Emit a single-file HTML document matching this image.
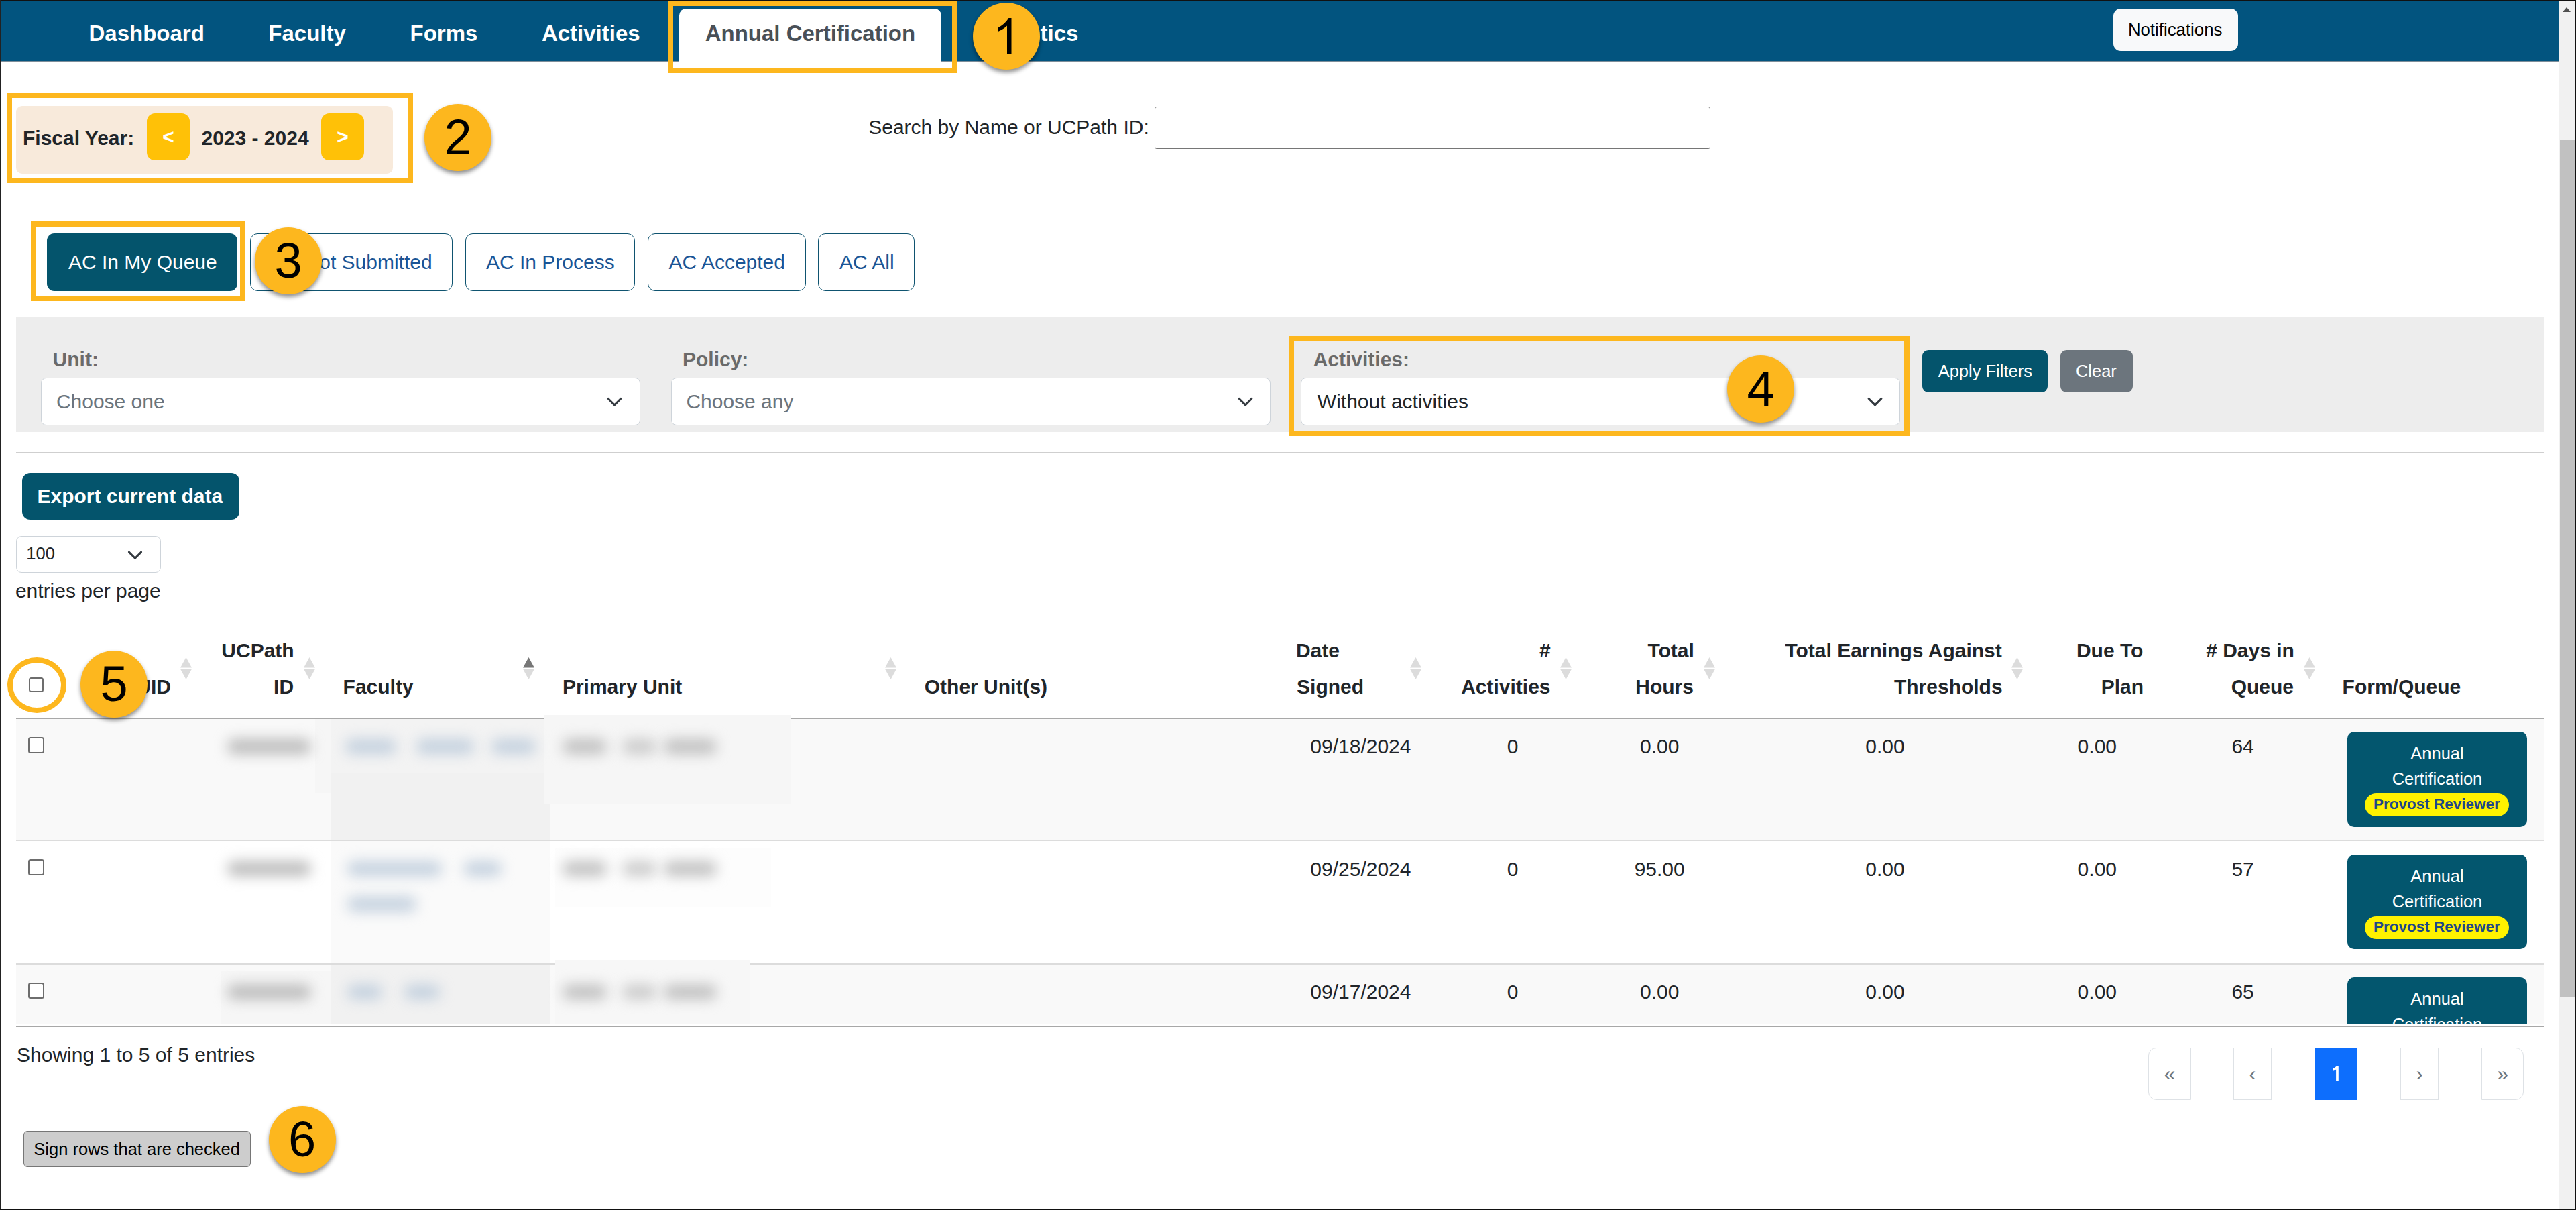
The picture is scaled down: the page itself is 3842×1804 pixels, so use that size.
<!DOCTYPE html>
<html><head><meta charset="utf-8"><title>Annual Certification</title>
<style>
html,body{margin:0;padding:0;width:3842px;height:1804px;overflow:hidden;background:#fff;}
body{position:relative;font-family:"Liberation Sans",sans-serif;}
.t{position:absolute;white-space:nowrap;line-height:0;}
.r{position:absolute;}
.circ{position:absolute;width:100px;height:100px;border-radius:50%;background:#fdb71e;box-shadow:0 4px 6px rgba(0,0,0,0.45);color:#000;font-size:74px;line-height:100px;text-align:center;font-family:"Liberation Sans",sans-serif;}
</style></head><body>
<div class="r" style="left:0.00px;top:0.00px;width:3842.00px;height:1804.00px;background:#fff;"></div>
<div class="r" style="left:1.00px;top:1.00px;width:3815.00px;height:90.50px;background:#02547f;"></div>
<div class="r" style="left:1.00px;top:91.20px;width:3815.00px;height:1.00px;background:#7d8d99;"></div>
<div class="t" style="left:132.49px;top:49.80px;font-size:33px;font-weight:700;color:#fff;">Dashboard</div>
<div class="t" style="left:400.29px;top:49.80px;font-size:33px;font-weight:700;color:#fff;">Faculty</div>
<div class="t" style="left:611.49px;top:49.80px;font-size:33px;font-weight:700;color:#fff;">Forms</div>
<div class="t" style="left:807.88px;top:49.80px;font-size:33px;font-weight:700;color:#fff;">Activities</div>
<div class="t" style="right:2233.65px;top:49.80px;font-size:33px;font-weight:700;color:#fff;">Statistics</div>
<div class="r" style="left:1013.00px;top:13.00px;width:391.00px;height:79.50px;background:#fff;border-radius:10px 10px 0 0;"></div>
<div class="t" style="left:1051.68px;top:49.80px;font-size:33px;font-weight:700;color:#495057;">Annual Certification</div>
<div class="r" style="left:996.00px;top:1.00px;width:432.00px;height:108.00px;border:8px solid #fdb71e;box-sizing:border-box;"></div>
<div class="r" style="left:3152.00px;top:13.00px;width:186.00px;height:63.00px;background:#f8f9fa;border-radius:11px;"></div>
<div class="t" style="left:3173.88px;top:44.30px;font-size:25.8px;color:#000;">Notifications</div>
<div class="r" style="left:10.00px;top:138.00px;width:606.00px;height:134.50px;border:8px solid #fdb71e;box-sizing:border-box;"></div>
<div class="r" style="left:24.00px;top:158.00px;width:562.00px;height:101.00px;background:#f8eadb;border-radius:9px;"></div>
<div class="t" style="left:33.99px;top:205.50px;font-size:30px;font-weight:700;color:#212529;">Fiscal Year:</div>
<div class="r" style="left:219.00px;top:169.00px;width:64.00px;height:70.00px;background:#ffc107;border-radius:12px;"></div>
<div class="r" style="left:479.00px;top:169.00px;width:64.00px;height:70.00px;background:#ffc107;border-radius:12px;"></div>
<div class="t" style="left:242.24px;top:203.50px;font-size:30px;font-weight:700;color:#fff;">&lt;</div>
<div class="t" style="left:502.24px;top:203.50px;font-size:30px;font-weight:700;color:#fff;">&gt;</div>
<div class="t" style="left:300.46px;top:205.50px;font-size:30px;font-weight:700;color:#212529;">2023 - 2024</div>
<div class="t" style="left:1295.24px;top:189.50px;font-size:30px;color:#212529;">Search by Name or UCPath ID:</div>
<div class="r" style="left:1722.00px;top:158.50px;width:829.00px;height:63.00px;border:1.5px solid #767676;border-radius:3px;box-sizing:border-box;background:#fff;"></div>
<div class="r" style="left:24.00px;top:316.50px;width:3770.00px;height:1.50px;background:#cfcfcf;"></div>
<div class="r" style="left:70.00px;top:348.00px;width:284.00px;height:85.50px;background:#04546c;border-radius:11px;"></div>
<div class="t" style="left:101.94px;top:390.50px;font-size:30px;color:#fff;">AC In My Queue</div>
<div class="r" style="left:373.00px;top:348.00px;width:302.00px;height:85.80px;border:1.5px solid #0f5470;border-radius:11px;box-sizing:border-box;"></div>
<div class="t" style="right:3197.37px;top:390.50px;font-size:30px;color:#1a5596;">Not Submitted</div>
<div class="r" style="left:694.00px;top:348.00px;width:253.00px;height:85.80px;border:1.5px solid #0f5470;border-radius:11px;box-sizing:border-box;"></div>
<div class="t" style="left:724.94px;top:390.50px;font-size:30px;color:#1a5596;">AC In Process</div>
<div class="r" style="left:966.00px;top:348.00px;width:235.60px;height:85.80px;border:1.5px solid #0f5470;border-radius:11px;box-sizing:border-box;"></div>
<div class="t" style="left:997.54px;top:390.50px;font-size:30px;color:#1a5596;">AC Accepted</div>
<div class="r" style="left:1220.00px;top:348.00px;width:144.00px;height:85.80px;border:1.5px solid #0f5470;border-radius:11px;box-sizing:border-box;"></div>
<div class="t" style="left:1251.94px;top:390.50px;font-size:30px;color:#1a5596;">AC All</div>
<div class="r" style="left:46.00px;top:330.00px;width:320.00px;height:118.50px;border:8px solid #fdb71e;box-sizing:border-box;"></div>
<div class="r" style="left:24.00px;top:472.00px;width:3770.00px;height:172.00px;background:#ededed;"></div>
<div class="t" style="left:78.60px;top:536.00px;font-size:30px;font-weight:700;color:#6a6a6a;">Unit:</div>
<div class="t" style="left:1017.99px;top:536.00px;font-size:30px;font-weight:700;color:#6a6a6a;">Policy:</div>
<div class="t" style="left:1958.65px;top:536.00px;font-size:30px;font-weight:700;color:#6a6a6a;">Activities:</div>
<div class="r" style="left:61.30px;top:563.30px;width:894.10px;height:71.00px;background:#fff;border:1.5px solid #ced4da;border-radius:8px;box-sizing:border-box;"></div>
<div class="t" style="left:83.88px;top:599.00px;font-size:30px;color:#6c757d;">Choose one</div>
<svg class="r" style="left:905.00px;top:591.50px;" width="23.00" height="15.00" viewBox="0 0 16 10"><path d="M1.5 1.5 L8 8 L14.5 1.5" fill="none" stroke="#343a40" stroke-width="2.1" stroke-linecap="round" stroke-linejoin="round"/></svg>
<div class="r" style="left:1001.30px;top:563.30px;width:893.30px;height:71.00px;background:#fff;border:1.5px solid #ced4da;border-radius:8px;box-sizing:border-box;"></div>
<div class="t" style="left:1023.38px;top:599.00px;font-size:30px;color:#6c757d;">Choose any</div>
<svg class="r" style="left:1845.50px;top:591.50px;" width="23.00" height="15.00" viewBox="0 0 16 10"><path d="M1.5 1.5 L8 8 L14.5 1.5" fill="none" stroke="#343a40" stroke-width="2.1" stroke-linecap="round" stroke-linejoin="round"/></svg>
<div class="r" style="left:1940.40px;top:563.00px;width:894.00px;height:71.10px;background:#fff;border:1.5px solid #ced4da;border-radius:8px;box-sizing:border-box;"></div>
<div class="t" style="left:1964.87px;top:599.00px;font-size:30px;color:#212529;">Without activities</div>
<svg class="r" style="left:2785.00px;top:591.50px;" width="23.00" height="15.00" viewBox="0 0 16 10"><path d="M1.5 1.5 L8 8 L14.5 1.5" fill="none" stroke="#343a40" stroke-width="2.1" stroke-linecap="round" stroke-linejoin="round"/></svg>
<div class="r" style="left:1922.00px;top:501.00px;width:926.00px;height:149.00px;border:8px solid #fdb71e;box-sizing:border-box;"></div>
<div class="r" style="left:2867.00px;top:522.00px;width:187.00px;height:63.00px;background:#04546c;border-radius:9px;"></div>
<div class="t" style="left:2890.65px;top:553.00px;font-size:25.5px;color:#fff;">Apply Filters</div>
<div class="r" style="left:3073.00px;top:522.00px;width:108.00px;height:63.00px;background:#6c757d;border-radius:9px;"></div>
<div class="t" style="left:3095.91px;top:553.00px;font-size:25.5px;color:#fff;">Clear</div>
<div class="r" style="left:24.00px;top:673.50px;width:3770.00px;height:1.50px;background:#cfcfcf;"></div>
<div class="r" style="left:33.00px;top:705.00px;width:324.00px;height:70.00px;background:#04546c;border-radius:12px;"></div>
<div class="t" style="left:55.49px;top:739.50px;font-size:30px;font-weight:700;color:#fff;">Export current data</div>
<div class="r" style="left:24.20px;top:799.40px;width:215.40px;height:55.10px;background:#fff;border:1.5px solid #ced4da;border-radius:8px;box-sizing:border-box;"></div>
<div class="t" style="left:39.36px;top:825.30px;font-size:25.5px;color:#212529;">100</div>
<svg class="r" style="left:190.00px;top:820.50px;" width="23.00" height="14.00" viewBox="0 0 16 10"><path d="M1.5 1.5 L8 8 L14.5 1.5" fill="none" stroke="#343a40" stroke-width="2.1" stroke-linecap="round" stroke-linejoin="round"/></svg>
<div class="t" style="left:22.93px;top:880.70px;font-size:30px;color:#212529;">entries per page</div>
<div class="t" style="right:3587.04px;top:1023.70px;font-size:30px;font-weight:700;color:#212529;">UID</div>
<svg class="r" style="left:269.00px;top:980px;" width="17" height="33" viewBox="0 0 17 33"><path d="M8.5 0 L17 15.5 L0 15.5 Z" fill="#dcdcdc"/><path d="M0 17.5 L17 17.5 L8.5 33 Z" fill="#dcdcdc"/></svg>
<div class="t" style="right:3403.34px;top:970.00px;font-size:30px;font-weight:700;color:#212529;">UCPath</div>
<div class="t" style="right:3403.94px;top:1023.70px;font-size:30px;font-weight:700;color:#212529;">ID</div>
<svg class="r" style="left:452.50px;top:980px;" width="17" height="33" viewBox="0 0 17 33"><path d="M8.5 0 L17 15.5 L0 15.5 Z" fill="#dcdcdc"/><path d="M0 17.5 L17 17.5 L8.5 33 Z" fill="#dcdcdc"/></svg>
<div class="t" style="left:511.59px;top:1023.70px;font-size:30px;font-weight:700;color:#212529;">Faculty</div>
<svg class="r" style="left:780.00px;top:980px;" width="17" height="33" viewBox="0 0 17 33"><path d="M8.5 0 L17 15.5 L0 15.5 Z" fill="#777"/><path d="M0 17.5 L17 17.5 L8.5 33 Z" fill="#dcdcdc"/></svg>
<div class="t" style="left:838.89px;top:1023.70px;font-size:30px;font-weight:700;color:#212529;">Primary Unit</div>
<svg class="r" style="left:1319.60px;top:980px;" width="17" height="33" viewBox="0 0 17 33"><path d="M8.5 0 L17 15.5 L0 15.5 Z" fill="#dcdcdc"/><path d="M0 17.5 L17 17.5 L8.5 33 Z" fill="#dcdcdc"/></svg>
<div class="t" style="left:1378.77px;top:1023.70px;font-size:30px;font-weight:700;color:#212529;">Other Unit(s)</div>
<div class="t" style="left:1932.89px;top:970.00px;font-size:30px;font-weight:700;color:#212529;">Date</div>
<div class="t" style="left:1934.04px;top:1023.70px;font-size:30px;font-weight:700;color:#212529;">Signed</div>
<svg class="r" style="left:2102.70px;top:980px;" width="17" height="33" viewBox="0 0 17 33"><path d="M8.5 0 L17 15.5 L0 15.5 Z" fill="#dcdcdc"/><path d="M0 17.5 L17 17.5 L8.5 33 Z" fill="#dcdcdc"/></svg>
<div class="t" style="right:1529.22px;top:970.00px;font-size:30px;font-weight:700;color:#212529;">#</div>
<div class="t" style="right:1529.47px;top:1023.70px;font-size:30px;font-weight:700;color:#212529;">Activities</div>
<svg class="r" style="left:2327.00px;top:980px;" width="17" height="33" viewBox="0 0 17 33"><path d="M8.5 0 L17 15.5 L0 15.5 Z" fill="#dcdcdc"/><path d="M0 17.5 L17 17.5 L8.5 33 Z" fill="#dcdcdc"/></svg>
<div class="t" style="right:1315.18px;top:970.00px;font-size:30px;font-weight:700;color:#212529;">Total</div>
<div class="t" style="right:1316.07px;top:1023.70px;font-size:30px;font-weight:700;color:#212529;">Hours</div>
<svg class="r" style="left:2541.20px;top:980px;" width="17" height="33" viewBox="0 0 17 33"><path d="M8.5 0 L17 15.5 L0 15.5 Z" fill="#dcdcdc"/><path d="M0 17.5 L17 17.5 L8.5 33 Z" fill="#dcdcdc"/></svg>
<div class="t" style="right:856.23px;top:970.00px;font-size:30px;font-weight:700;color:#212529;">Total Earnings Against</div>
<div class="t" style="right:855.37px;top:1023.70px;font-size:30px;font-weight:700;color:#212529;">Thresholds</div>
<svg class="r" style="left:3000.20px;top:980px;" width="17" height="33" viewBox="0 0 17 33"><path d="M8.5 0 L17 15.5 L0 15.5 Z" fill="#dcdcdc"/><path d="M0 17.5 L17 17.5 L8.5 33 Z" fill="#dcdcdc"/></svg>
<div class="t" style="right:645.63px;top:970.00px;font-size:30px;font-weight:700;color:#212529;">Due To</div>
<div class="t" style="right:644.94px;top:1023.70px;font-size:30px;font-weight:700;color:#212529;">Plan</div>
<div class="t" style="right:420.14px;top:970.00px;font-size:30px;font-weight:700;color:#212529;"># Days in</div>
<div class="t" style="right:420.97px;top:1023.70px;font-size:30px;font-weight:700;color:#212529;">Queue</div>
<svg class="r" style="left:3435.70px;top:980px;" width="17" height="33" viewBox="0 0 17 33"><path d="M8.5 0 L17 15.5 L0 15.5 Z" fill="#dcdcdc"/><path d="M0 17.5 L17 17.5 L8.5 33 Z" fill="#dcdcdc"/></svg>
<div class="t" style="left:3493.59px;top:1023.70px;font-size:30px;font-weight:700;color:#212529;">Form/Queue</div>
<div class="r" style="left:43.00px;top:1010.20px;width:22.20px;height:22.20px;border:2px solid #6d6d6d;border-radius:3.5px;box-sizing:border-box;background:#fff;"></div>
<div class="r" style="left:10.5px;top:980px;width:88px;height:83px;border:8px solid #fdb71e;border-radius:50%;box-sizing:border-box;"></div>
<div class="r" style="left:0;top:1070px;width:3842px;height:457px;overflow:hidden;">
<div class="r" style="left:24.00px;top:0.50px;width:3771.00px;height:182.50px;background:#f9f9f9;"></div>
<div class="r" style="left:494.00px;top:0.50px;width:327.00px;height:182.50px;background:#f1f1f1;"></div>
<div class="r" style="left:42.00px;top:28.50px;width:24.00px;height:24.00px;border:2px solid #6d6d6d;border-radius:3.5px;box-sizing:border-box;background:#fff;"></div>
<div class="t" style="left:1954.33px;top:43.00px;font-size:30px;color:#212529;">09/18/2024</div>
<div class="t" style="left:2247.66px;top:43.00px;font-size:30px;color:#212529;">0</div>
<div class="t" style="left:2446.01px;top:43.00px;font-size:30px;color:#212529;">0.00</div>
<div class="t" style="left:2782.31px;top:43.00px;font-size:30px;color:#212529;">0.00</div>
<div class="t" style="left:3098.61px;top:43.00px;font-size:30px;color:#212529;">0.00</div>
<div class="t" style="left:3328.42px;top:43.00px;font-size:30px;color:#212529;">64</div>
<div class="r" style="left:3501.30px;top:21.00px;width:267.40px;height:141.50px;background:#03566e;border-radius:10px;"></div>
<div class="t" style="left:3595.30px;top:53.20px;font-size:25.5px;color:#fff;">Annual</div>
<div class="t" style="left:3567.68px;top:91.30px;font-size:25.5px;color:#fff;">Certification</div>
<div class="r" style="left:3526.70px;top:113.00px;width:215.00px;height:34.00px;background:#fff200;border-radius:17px;"></div>
<div class="t" style="left:3539.98px;top:129.30px;font-size:22.5px;font-weight:700;color:#1e4689;">Provost Reviewer</div>
<div class="r" style="left:24.00px;top:183.00px;width:3771.00px;height:183.50px;background:#ffffff;"></div>
<div class="r" style="left:494.00px;top:183.00px;width:327.00px;height:183.50px;background:#fafafa;"></div>
<div class="r" style="left:24.00px;top:182.50px;width:3771.00px;height:1.50px;background:#dcdcdc;"></div>
<div class="r" style="left:42.00px;top:211.00px;width:24.00px;height:24.00px;border:2px solid #6d6d6d;border-radius:3.5px;box-sizing:border-box;background:#fff;"></div>
<div class="t" style="left:1954.33px;top:225.50px;font-size:30px;color:#212529;">09/25/2024</div>
<div class="t" style="left:2247.66px;top:225.50px;font-size:30px;color:#212529;">0</div>
<div class="t" style="left:2437.66px;top:225.50px;font-size:30px;color:#212529;">95.00</div>
<div class="t" style="left:2782.31px;top:225.50px;font-size:30px;color:#212529;">0.00</div>
<div class="t" style="left:3098.61px;top:225.50px;font-size:30px;color:#212529;">0.00</div>
<div class="t" style="left:3328.42px;top:225.50px;font-size:30px;color:#212529;">57</div>
<div class="r" style="left:3501.30px;top:203.50px;width:267.40px;height:141.50px;background:#03566e;border-radius:10px;"></div>
<div class="t" style="left:3595.30px;top:235.70px;font-size:25.5px;color:#fff;">Annual</div>
<div class="t" style="left:3567.68px;top:273.80px;font-size:25.5px;color:#fff;">Certification</div>
<div class="r" style="left:3526.70px;top:295.50px;width:215.00px;height:34.00px;background:#fff200;border-radius:17px;"></div>
<div class="t" style="left:3539.98px;top:311.80px;font-size:22.5px;font-weight:700;color:#1e4689;">Provost Reviewer</div>
<div class="r" style="left:24.00px;top:366.50px;width:3771.00px;height:183.50px;background:#f9f9f9;"></div>
<div class="r" style="left:494.00px;top:366.50px;width:327.00px;height:183.50px;background:#f1f1f1;"></div>
<div class="r" style="left:24.00px;top:366.00px;width:3771.00px;height:1.50px;background:#dcdcdc;"></div>
<div class="r" style="left:42.00px;top:394.50px;width:24.00px;height:24.00px;border:2px solid #6d6d6d;border-radius:3.5px;box-sizing:border-box;background:#fff;"></div>
<div class="t" style="left:1954.33px;top:409.00px;font-size:30px;color:#212529;">09/17/2024</div>
<div class="t" style="left:2247.66px;top:409.00px;font-size:30px;color:#212529;">0</div>
<div class="t" style="left:2446.01px;top:409.00px;font-size:30px;color:#212529;">0.00</div>
<div class="t" style="left:2782.31px;top:409.00px;font-size:30px;color:#212529;">0.00</div>
<div class="t" style="left:3098.61px;top:409.00px;font-size:30px;color:#212529;">0.00</div>
<div class="t" style="left:3328.42px;top:409.00px;font-size:30px;color:#212529;">65</div>
<div class="r" style="left:3501.30px;top:387.00px;width:267.40px;height:141.50px;background:#03566e;border-radius:10px;"></div>
<div class="t" style="left:3595.30px;top:419.20px;font-size:25.5px;color:#fff;">Annual</div>
<div class="t" style="left:3567.68px;top:457.30px;font-size:25.5px;color:#fff;">Certification</div>
<div class="r" style="left:3526.70px;top:479.00px;width:215.00px;height:34.00px;background:#fff200;border-radius:17px;"></div>
<div class="t" style="left:3539.98px;top:495.30px;font-size:22.5px;font-weight:700;color:#1e4689;">Provost Reviewer</div>
<div class="r" style="left:470.00px;top:0.50px;width:24.00px;height:111.50px;background:#f6f6f6;"></div>
<div class="r" style="left:494.00px;top:0.50px;width:327.00px;height:81.50px;background:#f3f3f3;"></div>
<div class="r" style="left:811.00px;top:-4.00px;width:369.00px;height:132.00px;background:#f6f6f6;"></div>
<div class="r" style="left:828.00px;top:195.00px;width:322.00px;height:87.00px;background:#fdfdfd;"></div>
<div class="r" style="left:828.00px;top:362.00px;width:290.00px;height:95.00px;background:#f7f7f7;"></div>
<div class="r" style="left:330.00px;top:378.00px;width:164.00px;height:79.00px;background:#f6f6f6;"></div>
<div class="r" style="left:338.60px;top:31.50px;width:125.40px;height:22.00px;background:#bababa;filter:blur(10px);border-radius:10px;"></div>
<div class="r" style="left:514.60px;top:31.50px;width:76.00px;height:22.00px;background:#c3d0de;filter:blur(10px);border-radius:10px;"></div>
<div class="r" style="left:620.50px;top:31.50px;width:86.20px;height:22.00px;background:#c3d0de;filter:blur(10px);border-radius:10px;"></div>
<div class="r" style="left:733.00px;top:31.50px;width:66.00px;height:22.00px;background:#c3d0de;filter:blur(10px);border-radius:10px;"></div>
<div class="r" style="left:839.00px;top:31.50px;width:66.00px;height:22.00px;background:#bfbfbf;filter:blur(10px);border-radius:10px;"></div>
<div class="r" style="left:928.00px;top:31.50px;width:51.00px;height:22.00px;background:#cacaca;filter:blur(10px);border-radius:10px;"></div>
<div class="r" style="left:989.50px;top:31.50px;width:79.50px;height:22.00px;background:#bfbfbf;filter:blur(10px);border-radius:10px;"></div>
<div class="r" style="left:338.60px;top:214.00px;width:125.40px;height:22.00px;background:#bababa;filter:blur(10px);border-radius:10px;"></div>
<div class="r" style="left:518.00px;top:214.00px;width:141.00px;height:22.00px;background:#c3d0de;filter:blur(10px);border-radius:10px;"></div>
<div class="r" style="left:692.00px;top:214.00px;width:55.70px;height:22.00px;background:#c3d0de;filter:blur(10px);border-radius:10px;"></div>
<div class="r" style="left:518.00px;top:267.00px;width:103.00px;height:22.00px;background:#c3d0de;filter:blur(10px);border-radius:10px;"></div>
<div class="r" style="left:839.00px;top:214.00px;width:66.00px;height:22.00px;background:#bfbfbf;filter:blur(10px);border-radius:10px;"></div>
<div class="r" style="left:928.00px;top:214.00px;width:51.00px;height:22.00px;background:#cacaca;filter:blur(10px);border-radius:10px;"></div>
<div class="r" style="left:989.50px;top:214.00px;width:79.50px;height:22.00px;background:#bfbfbf;filter:blur(10px);border-radius:10px;"></div>
<div class="r" style="left:338.60px;top:397.50px;width:125.40px;height:22.00px;background:#bababa;filter:blur(10px);border-radius:10px;"></div>
<div class="r" style="left:518.00px;top:397.50px;width:52.00px;height:22.00px;background:#c3d0de;filter:blur(10px);border-radius:10px;"></div>
<div class="r" style="left:603.00px;top:397.50px;width:52.50px;height:22.00px;background:#c3d0de;filter:blur(10px);border-radius:10px;"></div>
<div class="r" style="left:839.00px;top:397.50px;width:66.00px;height:22.00px;background:#bfbfbf;filter:blur(10px);border-radius:10px;"></div>
<div class="r" style="left:928.00px;top:397.50px;width:51.00px;height:22.00px;background:#cacaca;filter:blur(10px);border-radius:10px;"></div>
<div class="r" style="left:989.50px;top:397.50px;width:79.50px;height:22.00px;background:#bfbfbf;filter:blur(10px);border-radius:10px;"></div>
</div>
<div class="r" style="left:24.00px;top:1529.50px;width:3771.00px;height:1.50px;background:#a8a8a8;"></div>
<div class="r" style="left:24.00px;top:1070.00px;width:787.00px;height:1.50px;background:#a8a8a8;"></div>
<div class="r" style="left:1180.00px;top:1070.00px;width:2615.00px;height:1.50px;background:#a8a8a8;"></div>
<div class="r" style="left:811.00px;top:1066.00px;width:369.00px;height:5.50px;background:#f6f6f6;"></div>
<div class="t" style="left:25.04px;top:1572.50px;font-size:30px;color:#212529;">Showing 1 to 5 of 5 entries</div>
<div class="r" style="left:3204px;top:1562px;width:64px;height:77.5px;border:1.5px solid #dee2e6;border-radius:12px 0 0 12px;box-sizing:border-box;"></div>
<div class="r" style="left:3331px;top:1562px;width:57px;height:77.5px;border:1.5px solid #dee2e6;box-sizing:border-box;"></div>
<div class="r" style="left:3452.00px;top:1562.00px;width:64.00px;height:77.50px;background:#0d6efd;"></div>
<div class="r" style="left:3580px;top:1562px;width:57px;height:77.5px;border:1.5px solid #dee2e6;box-sizing:border-box;"></div>
<div class="r" style="left:3701px;top:1562px;width:63px;height:77.5px;border:1.5px solid #dee2e6;border-radius:0 12px 12px 0;box-sizing:border-box;"></div>
<div class="t" style="left:3227.66px;top:1600.50px;font-size:30px;color:#6c757d;">&laquo;</div>
<div class="t" style="left:3354.50px;top:1600.50px;font-size:30px;color:#6c757d;">&lsaquo;</div>
<svg class="r" style="left:3479px;top:1589px;" width="9" height="22" viewBox="0 0 9 22"><path d="M8.8 0 L8.8 22 L5.1 22 L5.1 5.6 Q3 7.3 0 8.1 L0 4.6 Q3.4 3.4 6.4 0 Z" fill="#fff"/></svg>
<div class="t" style="left:3603.50px;top:1600.50px;font-size:30px;color:#6c757d;">&rsaquo;</div>
<div class="t" style="left:3724.16px;top:1600.50px;font-size:30px;color:#6c757d;">&raquo;</div>
<div class="r" style="left:35.00px;top:1686.40px;width:338.60px;height:54.10px;background:#cdcdcd;border:1.5px solid #767676;border-radius:6px;box-sizing:border-box;"></div>
<div class="t" style="left:50.34px;top:1713.40px;font-size:25.5px;color:#000;">Sign rows that are checked</div>
<div class="circ" style="left:1451.00px;top:3.50px;"></div>
<svg class="r" style="left:1489.00px;top:27.00px;" width="20" height="54" viewBox="0 0 20 54"><path d="M19.5 0 L19.5 53 L13 53 L13 11.5 Q8 16.5 0 19.8 L0 14.2 Q10 9 15.4 0 Z" fill="#000"/></svg>
<div class="circ" style="left:633.00px;top:154.70px;">2</div>
<div class="circ" style="left:380.00px;top:339.20px;">3</div>
<div class="circ" style="left:2576.00px;top:529.80px;">4</div>
<div class="circ" style="left:120.20px;top:970.00px;">5</div>
<div class="circ" style="left:400.50px;top:1649.00px;">6</div>
<div class="r" style="left:3816.00px;top:1.00px;width:25.00px;height:1802.00px;background:#f1f1f1;"></div>
<svg class="r" style="left:3822px;top:11px;" width="12" height="8" viewBox="0 0 12 8"><path d="M6 0 L12 7 L0 7 Z" fill="#505050"/></svg>
<div class="r" style="left:3818.00px;top:209.00px;width:22.00px;height:1278.00px;background:#c1c1c1;"></div>
<div class="r" style="left:0.00px;top:0.00px;width:3842.00px;height:1.00px;background:#111;"></div>
<div class="r" style="left:1.00px;top:1.00px;width:3840.00px;height:1.00px;background:#ebe5d5;"></div>
<div class="r" style="left:0.00px;top:0.00px;width:1.00px;height:1804.00px;background:#222;"></div>
<div class="r" style="left:0.00px;top:1803.00px;width:3842.00px;height:1.00px;background:#111;"></div>
<div class="r" style="left:3841.00px;top:0.00px;width:1.00px;height:1804.00px;background:#111;"></div>
</body></html>
